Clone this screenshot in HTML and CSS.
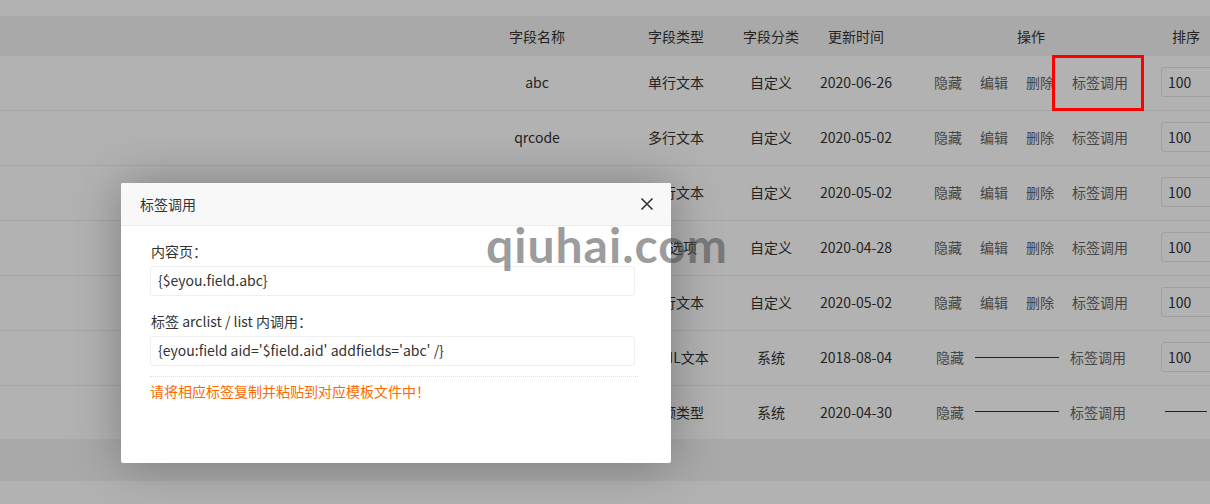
FILE: index.html
```html
<!DOCTYPE html>
<html lang="zh-CN">
<head>
<meta charset="utf-8">
<title>字段管理</title>
<link rel="stylesheet" href="styles.css">
</head>
<body>
<div class="page">
  <div class="topbar"></div>
  <div class="table">
    <div class="row head">
      <div class="c"></div>
      <div class="c">字段名称</div>
      <div class="c">字段类型</div>
      <div class="c">字段分类</div>
      <div class="c">更新时间</div>
      <div class="c">操作</div>
      <div class="c">排序</div>
    </div>
    <div class="row">
      <div class="c"></div><div class="c">abc</div><div class="c">单行文本</div><div class="c">自定义</div><div class="c">2020-06-26</div>
      <div class="c ops"><span class="lk">隐藏</span><span class="lk">编辑</span><span class="lk">删除</span><span class="lk">标签调用</span></div>
      <div class="c sort"><span class="num">100</span></div>
    </div>
    <div class="row">
      <div class="c"></div><div class="c">qrcode</div><div class="c">多行文本</div><div class="c">自定义</div><div class="c">2020-05-02</div>
      <div class="c ops"><span class="lk">隐藏</span><span class="lk">编辑</span><span class="lk">删除</span><span class="lk">标签调用</span></div>
      <div class="c sort"><span class="num">100</span></div>
    </div>
    <div class="row">
      <div class="c"></div><div class="c">content</div><div class="c">多行文本</div><div class="c">自定义</div><div class="c">2020-05-02</div>
      <div class="c ops"><span class="lk">隐藏</span><span class="lk">编辑</span><span class="lk">删除</span><span class="lk">标签调用</span></div>
      <div class="c sort"><span class="num">100</span></div>
    </div>
    <div class="row">
      <div class="c"></div><div class="c"></div><div class="c">单选项</div><div class="c">自定义</div><div class="c">2020-04-28</div>
      <div class="c ops"><span class="lk">隐藏</span><span class="lk">编辑</span><span class="lk">删除</span><span class="lk">标签调用</span></div>
      <div class="c sort"><span class="num">100</span></div>
    </div>
    <div class="row">
      <div class="c"></div><div class="c">intro</div><div class="c">多行文本</div><div class="c">自定义</div><div class="c">2020-05-02</div>
      <div class="c ops"><span class="lk">隐藏</span><span class="lk">编辑</span><span class="lk">删除</span><span class="lk">标签调用</span></div>
      <div class="c sort"><span class="num">100</span></div>
    </div>
    <div class="row">
      <div class="c"></div><div class="c">content</div><div class="c">HTML文本</div><div class="c">系统</div><div class="c">2018-08-04</div>
      <div class="c ops sys"><span class="lk">隐藏</span><span class="dash"></span><span class="lk">标签调用</span></div>
      <div class="c sort"><span class="num">100</span></div>
    </div>
    <div class="row">
      <div class="c"></div><div class="c">courseware</div><div class="c">视频类型</div><div class="c">系统</div><div class="c">2020-04-30</div>
      <div class="c ops sys"><span class="lk">隐藏</span><span class="dash"></span><span class="lk">标签调用</span></div>
      <div class="c sort"><span class="sdash"></span></div>
    </div>
  </div>
  <div class="footer"></div>
</div>

<div class="shade"></div>

<div class="modal">
  <div class="modal-head">
    <span class="modal-title">标签调用</span>
    <span class="close"><svg width="14" height="14" viewBox="0 0 14 14"><path d="M1.5 1.5L12.5 12.5M12.5 1.5L1.5 12.5" stroke="#333" stroke-width="1.6" fill="none"/></svg></span>
  </div>
  <div class="modal-body">
    <div class="label">内容页：</div>
    <div class="field">{$eyou.field.abc}</div>
    <div class="label second">标签 arclist / list 内调用：</div>
    <div class="field">{eyou:field aid='$field.aid' addfields='abc' /}</div>
    <div class="sep"></div>
    <div class="tip">请将相应标签复制并粘贴到对应模板文件中！</div>
  </div>
</div>

<div class="mark-box"></div>
<div class="watermark">qiuhai.com</div>
</body>
</html>
```

FILE: styles.css
```css
* { box-sizing: border-box; }
html, body { margin: 0; padding: 0; }
body {
  width: 1210px;
  height: 504px;
  overflow: hidden;
  background: #fff;
  font-family: "Noto Sans CJK SC", "Microsoft YaHei", sans-serif;
  font-size: 14px;
  color: #333;
  position: relative;
}
.page { width: 1210px; overflow: hidden; }
.topbar { height: 16px; background: #fff; }
.table { width: 1225px; }
.row {
  display: grid;
  grid-template-columns: 467px 140px 138px 52px 118px 232px 78px;
  height: 55px;
  border-bottom: 1px solid #eee;
  align-items: center;
  padding-bottom: 2px;
}
.row.head {
  height: 40px;
  background: #f3f3f3;
  border-bottom: none;
  padding-bottom: 1px;
}
.row:last-child { height: 53px; border-bottom: none; }
.c {
  display: flex;
  justify-content: center;
  align-items: center;
  white-space: nowrap;
  line-height: 20px;
}
.ops { gap: 18px; }
.ops.sys { gap: 11px; }
.lk { color: #666; }
.dash {
  width: 84px;
  height: 1px;
  background: #333;
}
.sort { justify-content: flex-start; }
.num {
  margin-left: 14px;
  width: 60px;
  height: 30px;
  border: 1px solid #e6e6e6;
  border-radius: 3px;
  padding-left: 6px;
  line-height: 28px;
  color: #333;
}
.sdash {
  margin-left: 18px;
  width: 42px;
  height: 1px;
  background: #333;
}
.footer { height: 42px; background: #f3f3f3; }

.shade {
  position: absolute;
  left: 0; top: 0;
  width: 1210px; height: 504px;
  background: rgba(0, 0, 0, 0.3);
}

.modal {
  position: absolute;
  left: 121px; top: 183px;
  width: 550px; height: 280px;
  background: #fff;
  border-radius: 2px;
  box-shadow: 1px 1px 50px rgba(0, 0, 0, 0.3);
}
.modal-head {
  height: 43px;
  background: #f8f8f8;
  border-bottom: 1px solid #eee;
  border-radius: 2px 2px 0 0;
  display: flex;
  align-items: center;
  justify-content: space-between;
  padding: 0 17px 1px 19px;
}
.modal-title { font-size: 14px; color: #333; }
.close { display: flex; width: 14px; height: 14px; }
.modal-body { padding: 15px 36px 0 29px; }
.label { line-height: 20px; color: #333; padding-left: 1px; }
.label.second { margin-top: 15px; }
.field {
  margin-top: 5px;
  height: 30px;
  border: 1px solid #eee;
  border-radius: 3px;
  padding-left: 7px;
  line-height: 27px;
  color: #333;
  width: 485px;
}
.sep {
  margin-top: 10px;
  width: 488px;
  border-top: 1px dotted #ddd;
}
.tip {
  margin-top: 4px;
  color: #ff6a00;
  line-height: 20px;
}

.mark-box {
  position: absolute;
  left: 1052px; top: 55px;
  width: 92px; height: 56px;
  border: 3px solid #f00;
}
.watermark {
  position: absolute;
  left: 486px; top: 215px;
  font-family: "Lato", sans-serif;
  font-weight: 700;
  font-size: 48px;
  line-height: 60px;
  letter-spacing: 1px;
  color: rgba(70, 70, 70, 0.55);
}
```
